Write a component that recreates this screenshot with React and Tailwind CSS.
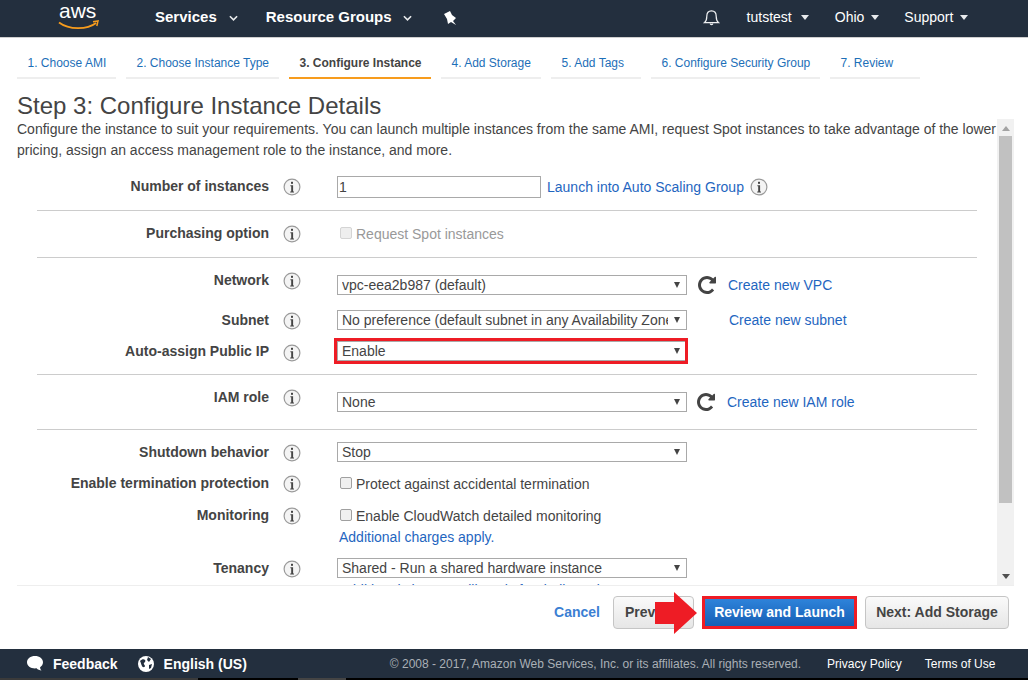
import React from "react";

const STEPS = [
  { label: "1. Choose AMI", width: "w-[99px]" },
  { label: "2. Choose Instance Type", width: "w-[153px]" },
  { label: "3. Configure Instance", width: "w-[142px]", active: true },
  { label: "4. Add Storage", width: "w-[100px]" },
  { label: "5. Add Tags", width: "w-[90px]" },
  { label: "6. Configure Security Group", width: "w-[169px]" },
  { label: "7. Review", width: "w-[90px]" },
];

const Chevron = ({ className = "" }) => (
  <svg viewBox="0 0 10 6" className={`w-[9px] h-[6px] ${className}`} fill="none" stroke="#e8eaec" strokeWidth="1.8">
    <path d="M1 1l4 4 4-4" />
  </svg>
);

const Caret = ({ className = "" }) => (
  <svg viewBox="0 0 8 5" className={`w-[8px] h-[5px] ${className}`} fill="#e8eaec">
    <path d="M0 0h8L4 5z" />
  </svg>
);

const InfoIcon = () => (
  <svg viewBox="0 0 18 18" className="w-[18px] h-[18px] shrink-0">
    <circle cx="9" cy="9" r="7.9" fill="#f4f4f4" stroke="#9a9a9a" strokeWidth="1.2" />
    <rect x="8" y="3.8" width="2" height="2" fill="#444" />
    <path d="M7.4 7.2h2.700v6.200h0.900v1H7.200v-1h1v-5.200h-0.800z" fill="#444" />
  </svg>
);

const RefreshIcon = () => (
  <svg viewBox="0 128 1536 1536" className="w-[18px] h-[18px] shrink-0" fill="#444">
    <path d="M1536 256v448q0 26-19 45t-45 19h-448q-42 0-59-40-17-39 14-69l138-138q-148-137-349-137-104 0-198.500 40.500t-163.500 109.500-109.500 163.500-40.500 198.500 40.500 198.500 109.500 163.500 163.500 109.500 198.500 40.500q119 0 225-52t179-147q7-10 23-12 15 0 25 9l137 138q9 8 9.500 20.500t-7.500 22.500q-109 132-264 204.500t-327 72.500q-156 0-298-61t-245-164-164-245-61-298 61-298 164-245 245-164 298-61q147 0 284.500 55.500t244.500 156.500l130-129q29-31 70-14 39 17 39 59z" />
  </svg>
);

const Select = ({ value }) => (
  <div className="relative w-[350px] h-[20px]">
    <select
      defaultValue={value}
      className="w-full h-full appearance-none bg-white border border-[#a9a9a9] pl-[4px] pr-[18px] text-[14px] leading-[18px] text-[#444] rounded-none outline-none"
    >
      <option>{value}</option>
    </select>
    <svg viewBox="0 0 6 6" className="absolute right-[7px] top-[7px] w-[6px] h-[6px] pointer-events-none" fill="#444">
      <path d="M0 0h6L3 6z" />
    </svg>
  </div>
);

const Check = ({ disabled, lift = "mb-[2px]" }) => (
  <input
    type="checkbox"
    disabled={disabled}
    className={`appearance-none w-[12px] h-[12px] ml-[3px] mr-[4px] rounded-[2px] border shrink-0 ${lift} ${
      disabled ? "border-[#d4d4d4] bg-[#eeeeee]" : "border-[#a0a0a0] bg-[#f0f0f0]"
    }`}
  />
);

// shift moves the label and info icon off the control's centre line
const Row = ({ label, h = "h-[20px]", mt, shift = "", children }) => (
  <div className={`flex items-center ${h} ${mt}`}>
    <div className={`flex items-center shrink-0 ${shift}`}>
      <div className="w-[252px] shrink-0 text-right text-[14px] font-bold text-[#444] leading-none -mt-[3px] whitespace-nowrap">
        {label}
      </div>
      <div className="ml-[14px] w-[18px] shrink-0 flex justify-center">
        <InfoIcon />
      </div>
    </div>
    <div className="ml-[36px] flex items-center text-[14px] text-[#444] whitespace-nowrap">{children}</div>
  </div>
);

const Rule = ({ mt }) => <div className={`h-px ml-[20px] w-[940px] bg-[#cccccc] ${mt}`} />;

const Link = ({ children, className = "" }) => (
  <a href="#" className={`text-[14px] text-[#1f66bf] whitespace-nowrap ${className}`}>
    {children}
  </a>
);

const Header = () => (
  <header className="h-[38px] shrink-0 bg-[#232f3e] border-b border-[#cfcfcf] pb-[2px] flex items-center text-white">
    <div className="relative ml-[58px] w-[42px] h-[35px] shrink-0">
      <span className="absolute left-[1px] top-0 text-[21px] leading-[21px] text-white">aws</span>
      <svg viewBox="0 0 42 10" className="absolute left-0 top-[20px] w-[42px] h-[10px]" fill="none">
        <path d="M1 2.500C11 10 29 10 38 3" stroke="#f79c1d" strokeWidth="1.8" />
        <path d="M35 1.800l5-.8-1.200 5" stroke="#f79c1d" strokeWidth="1.500" />
      </svg>
    </div>
    <span className="ml-[55px] text-[15px] font-bold">Services</span>
    <Chevron className="ml-[12px]" />
    <span className="ml-[28px] text-[15px] font-bold">Resource Groups</span>
    <Chevron className="ml-[11px]" />
    <svg viewBox="0 0 14 14" className="ml-[31px] w-[14px] h-[14px]" fill="#fff">
      <path d="M1 3L7 0l2 4 4 3-3 3 3 4-5-3-3 2-1-5z" />
    </svg>
    <svg viewBox="0 0 18 20" className="ml-[246px] w-[17px] h-[19px]" fill="none" stroke="#eef0f2" strokeWidth="1.300">
      <path d="M1.500 15.500c2-1.500 2.500-3 2.500-6.500 0-3.500 2-6 5-6s5 2.500 5 6c0 3.500.5 5 2.500 6.500z" />
      <path d="M7.500 16.500a1.600 1.600 0 0 0 3 0" fill="#eef0f2" />
    </svg>
    <span className="ml-[27px] text-[14px]">tutstest</span>
    <Caret className="ml-[9px]" />
    <span className="ml-[26px] text-[14px]">Ohio</span>
    <Caret className="ml-[7px]" />
    <span className="ml-[25px] text-[14px]">Support</span>
    <Caret className="ml-[7px]" />
  </header>
);

const Tabs = () => (
  <nav className="flex gap-[10px] ml-[17px] mt-[10px] h-[31px] shrink-0">
    {STEPS.map((s) => (
      <div
        key={s.label}
        className={`${s.width} pl-[10.5px] flex items-center border-b-2 text-[12px] whitespace-nowrap ${
          s.active ? "border-[#f79c1d] text-[#444] font-bold" : "border-[#eeeeee] text-[#1d6fb8]"
        }`}
      >
        {s.label}
      </div>
    ))}
  </nav>
);

const Scrollbar = () => (
  <div className="w-[17px] shrink-0 bg-[#f1f1f1] flex flex-col items-center">
    <svg viewBox="0 0 8 5" className="w-[8px] h-[5px] mt-[7px] shrink-0" fill="#a3a3a3">
      <path d="M4 0l4 5H0z" />
    </svg>
    <div className="w-[13px] h-[367px] mt-[5px] bg-[#c1c1c1] shrink-0" />
    <svg viewBox="0 0 8 5" className="w-[8px] h-[5px] mt-[71px] shrink-0" fill="#505050">
      <path d="M0 0h8L4 5z" />
    </svg>
  </div>
);

const ConfigForm = () => (
  <div className="flex-1 overflow-hidden">
    <p className="text-[14px] leading-[21px] text-[#444]">
      Configure the instance to suit your requirements. You can launch multiple instances from the same AMI, request Spot instances to take advantage of the lower pricing, assign an access management role to the instance, and more.
    </p>

    <Row label="Number of instances" h="h-[22px]" mt="mt-[15px]">
      <input
        defaultValue="1"
        className="w-[204px] h-[22px] border border-[#a9a9a9] px-[1px] text-[14px] text-[#444] outline-none"
      />
      <Link className="ml-[6px]">Launch into Auto Scaling Group</Link>
      <span className="ml-[6px] flex"><InfoIcon /></span>
    </Row>
    <Rule mt="mt-[12px]" />

    <Row label="Purchasing option" h="h-[22px]" mt="mt-[12px]">
      <Check disabled lift="mb-[3px]" />
      <span className="text-[#999999]">Request Spot instances</span>
    </Row>
    <Rule mt="mt-[12px]" />

    <Row label="Network" mt="mt-[17px]" shift="mb-[8px]">
      <Select value="vpc-eea2b987 (default)" />
      <span className="ml-[11px] flex"><RefreshIcon /></span>
      <Link className="ml-[12px]">Create new VPC</Link>
    </Row>
    <Row label="Subnet" mt="mt-[15px]" shift="mt-[2px]">
      <Select value="No preference (default subnet in any Availability Zone)" />
      <Link className="ml-[42px]">Create new subnet</Link>
    </Row>
    <Row label="Auto-assign Public IP" mt="mt-[11px]" shift="mt-[3px]">
      <div className="relative h-[20px]">
        <Select value="Enable" />
        <div className="absolute left-[-3px] right-[-1px] top-[-3px] bottom-[-3px] border-[3px] border-[#ee1c25] pointer-events-none" />
      </div>
    </Row>
    <Rule mt="mt-[13px]" />

    <Row label="IAM role" mt="mt-[17px]" shift="mb-[8px]">
      <Select value="None" />
      <span className="ml-[10px] flex"><RefreshIcon /></span>
      <Link className="ml-[12px]">Create new IAM role</Link>
    </Row>
    <Rule mt="mt-[17px]" />

    <Row label="Shutdown behavior" mt="mt-[12px]" shift="mt-[2px]">
      <Select value="Stop" />
    </Row>
    <Row label="Enable termination protection" h="h-[22px]" mt="mt-[11px]">
      <Check />
      <span>Protect against accidental termination</span>
    </Row>
    <Row label="Monitoring" h="h-[22px]" mt="mt-[10px]">
      <Check />
      <span>Enable CloudWatch detailed monitoring</span>
    </Row>
    <div className="ml-[322px] h-[20px] leading-[20px]">
      <Link>Additional charges apply.</Link>
    </div>
    <Row label="Tenancy" mt="mt-[11px]" shift="mt-[2px]">
      <Select value="Shared - Run a shared hardware instance" />
    </Row>
    <div className="ml-[322px] h-[20px] leading-[20px] mt-[2px]">
      <Link>Additional charges will apply for dedicated tenancy.</Link>
    </div>
  </div>
);

const ActionBar = () => (
  <div className="h-[63px] shrink-0 flex items-center justify-end pr-[19px] pb-[10px]">
    <a href="#" className="text-[14px] font-bold text-[#3b7fd3] mr-[13px]">Cancel</a>
    <div className="relative">
      <button className="w-[81px] h-[33px] pl-[11px] text-left rounded-[4px] border border-[#c5c5c5] bg-gradient-to-b from-[#fafafa] to-[#e6e6e6] text-[14px] font-bold text-[#444] overflow-hidden whitespace-nowrap">
        Previous
      </button>
      <svg viewBox="0 0 42 42" className="absolute left-[42px] top-[-4px] w-[42px] h-[42px]" fill="#ee1c25">
        <path d="M0 10h19V0l23 21-23 21V32H0z" />
      </svg>
    </div>
    <button className="ml-[8px] w-[155px] h-[33px] border-[3px] border-[#ee1c25] bg-gradient-to-b from-[#2e83da] to-[#155fb5] text-[14px] font-bold text-white">
      Review and Launch
    </button>
    <button className="ml-[8px] w-[144px] h-[33px] rounded-[4px] border border-[#c5c5c5] bg-gradient-to-b from-[#fafafa] to-[#e6e6e6] text-[14px] font-bold text-[#444]">
      Next: Add Storage
    </button>
  </div>
);

const Footer = () => (
  <footer className="h-[29px] shrink-0 bg-[#232f3e] flex items-center text-white">
    <svg viewBox="0 0 18 17" className="ml-[26px] w-[18px] h-[17px]" fill="#fff">
      <path d="M9 1c4.500 0 8 2.700 8 6.200 0 2.200-1.300 3.900-2.900 5 0 1.400.7 2.600 1.500 3.300-2.100 0-3.900-.9-5-2.200-.5.100-1 .1-1.600.1C4.500 13.400 1 10.700 1 7.200S4.500 1 9 1z" />
    </svg>
    <span className="ml-[9px] mt-[2px] text-[14px] font-bold">Feedback</span>
    <svg viewBox="0 0 16 16" className="ml-[20px] w-[16px] h-[16px]">
      <circle cx="8" cy="8" r="8" fill="#fff" />
      <path d="M2 5c2-2 4-2 5-1s0 2-1 3 1 2 1 3-2 2-3 0-1-3-2-5zM10 1l3 2-2 3-2-2zM11 9l3-1-1 4-2 1z" fill="#232f3e" />
    </svg>
    <span className="ml-[10px] mt-[2px] text-[14px] font-bold">English (US)</span>
    <span className="ml-[143px] text-[12px] text-[#aab0b6] whitespace-nowrap">
      © 2008 - 2017, Amazon Web Services, Inc. or its affiliates. All rights reserved.
    </span>
    <span className="ml-[26px] text-[12px] whitespace-nowrap">Privacy Policy</span>
    <span className="ml-[23px] text-[12px] whitespace-nowrap">Terms of Use</span>
  </footer>
);

export default function App() {
  return (
    <div className="w-[1028px] h-[680px] overflow-hidden bg-white flex flex-col font-['Liberation_Sans',Arial,sans-serif]">
      <Header />
      <Tabs />
      <h1 className="ml-[17px] mt-[13px] text-[24px] leading-[27px] text-[#444] shrink-0">Step 3: Configure Instance Details</h1>
      <div className="flex h-[467px] shrink-0 ml-[17px] w-[997px] border-b border-[#eeeeee]">
        <ConfigForm />
        <Scrollbar />
      </div>
      <ActionBar />
      <Footer />
      <div className="h-[2px] shrink-0 flex bg-[#1c1c1c]">
        <div className="w-[198px] bg-[#3a3a3a]" />
        <div className="w-[100px] bg-black" />
        <div className="w-[48px] bg-[#444]" />
        <div className="flex-1 bg-black" />
      </div>
    </div>
  );
}
